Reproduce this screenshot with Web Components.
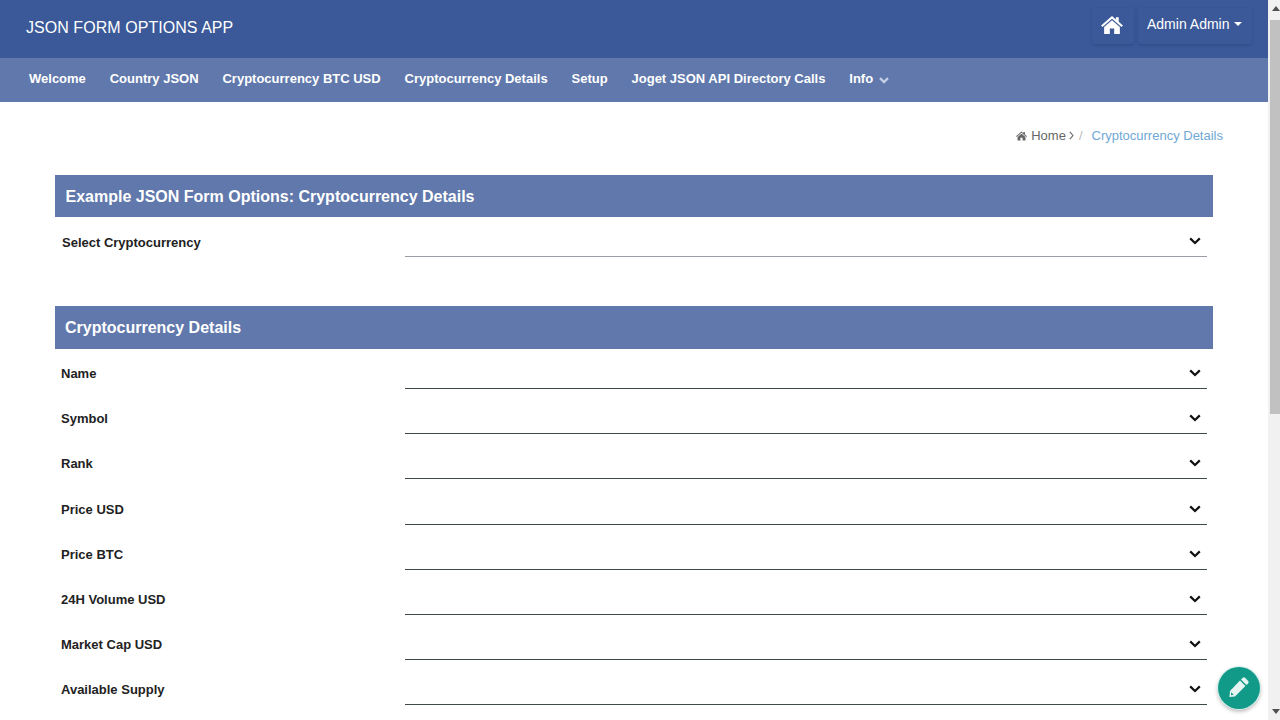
<!DOCTYPE html>
<html>
<head>
<meta charset="utf-8">
<title>JSON Form Options App</title>
<style>
    html, body { margin: 0; height: 100%; overflow: hidden; background: #fff; }
    body { display: flex; font-family: "Liberation Sans", Arial, sans-serif; }
    #page { flex: 1; min-width: 0; height: 720px; overflow: hidden; }
</style>
</head>
<body>
<div id="page">
    <app-header title-text="JSON FORM OPTIONS APP" user="Admin Admin"></app-header>
    <app-nav>
        <nav-link>Welcome</nav-link>
        <nav-link>Country JSON</nav-link>
        <nav-link>Cryptocurrency BTC USD</nav-link>
        <nav-link>Cryptocurrency Details</nav-link>
        <nav-link>Setup</nav-link>
        <nav-link>Joget JSON API Directory Calls</nav-link>
        <nav-link has-menu>Info</nav-link>
    </app-nav>
    <bread-crumb current="Cryptocurrency Details"></bread-crumb>
    <form-section heading="Example JSON Form Options: Cryptocurrency Details" class="first">
        <form-row label="Select Cryptocurrency" muted></form-row>
    </form-section>
    <form-section heading="Cryptocurrency Details" class="second">
        <form-row label="Name"></form-row>
        <form-row label="Symbol"></form-row>
        <form-row label="Rank"></form-row>
        <form-row label="Price USD"></form-row>
        <form-row label="Price BTC"></form-row>
        <form-row label="24H Volume USD"></form-row>
        <form-row label="Market Cap USD"></form-row>
        <form-row label="Available Supply"></form-row>
    </form-section>
</div>
<page-scrollbar></page-scrollbar>
<edit-fab></edit-fab>

<script>
// Top bar with app title, home button and user menu
class AppHeader extends HTMLElement {
    constructor() {
        super();
        const template = document.createElement('template');
        template.innerHTML = `
        <style>
            :host {
                display: flex;
                align-items: flex-start;
                justify-content: space-between;
                height: 58px;
                box-sizing: border-box;
                padding: 8px 16px 0 26px;
                background: #3b5998;
                color: #fff;
            }
            .title { font-size: 16px; line-height: 39px; letter-spacing: .05px; }
            .actions { display: flex; gap: 4px; }
            .btn {
                display: flex;
                align-items: center;
                height: 36px;
                box-sizing: border-box;
                border-radius: 3px;
                box-shadow: 0 1px 3px rgba(30, 50, 100, .4);
            }
            .home { width: 42px; justify-content: center; padding: 0 2px 3px 0; }
            .user { width: 114px; padding-left: 9px; font-size: 14px; padding-bottom: 4px; }
            .caret {
                margin-left: 5px;
                border-top: 4px solid #fff;
                border-left: 4px solid transparent;
                border-right: 4px solid transparent;
            }
        </style>
        <div class="title"></div>
        <div class="actions">
            <div class="btn home">
                <svg width="22" height="18" viewBox="0 0 23 19"><path fill="#fff" d="M11.5 0 L15.6 3.6 V1.2 H18.6 V6.2 L23 10 L21.6 11.6 L11.5 2.9 L1.4 11.6 L0 10 Z M11.5 4.6 L19.8 11.7 V19 H13.8 V13.2 H9.2 V19 H3.2 V11.7 Z"/></svg>
            </div>
            <div class="btn user"><span class="name"></span><span class="caret"></span></div>
        </div>
        `;
        this.attachShadow({ mode: 'open' });
        this.shadowRoot.appendChild(template.content.cloneNode(true));
        this.shadowRoot.querySelector('.title').textContent = this.getAttribute('title-text');
        this.shadowRoot.querySelector('.name').textContent = this.getAttribute('user');
    }
}

class AppNav extends HTMLElement {
    constructor() {
        super();
        const template = document.createElement('template');
        template.innerHTML = `
        <style>
            :host {
                display: flex;
                align-items: center;
                gap: 23.9px;
                height: 44px;
                box-sizing: border-box;
                padding: 0 0 3px 29px;
                background: #6078ab;
            }
        </style>
        <slot></slot>
        `;
        this.attachShadow({ mode: 'open' });
        this.shadowRoot.appendChild(template.content.cloneNode(true));
    }
}

class NavLink extends HTMLElement {
    constructor() {
        super();
        const template = document.createElement('template');
        template.innerHTML = `
        <style>
            :host {
                display: flex;
                align-items: center;
                font-size: 13px;
                font-weight: bold;
                color: #fff;
                white-space: nowrap;
            }
            svg { display: none; margin: 4px 0 0 6px; }
            :host([has-menu]) svg { display: block; }
        </style>
        <slot></slot>
        <svg width="10" height="7" viewBox="0 0 10 7"><path d="M1 1.2 L5 5 L9 1.2" fill="none" stroke="#c3cfe6" stroke-width="2.4"/></svg>
        `;
        this.attachShadow({ mode: 'open' });
        this.shadowRoot.appendChild(template.content.cloneNode(true));
    }
}

class BreadCrumb extends HTMLElement {
    constructor() {
        super();
        const template = document.createElement('template');
        template.innerHTML = `
        <style>
            :host {
                display: flex;
                align-items: center;
                justify-content: flex-end;
                height: 73px;
                box-sizing: border-box;
                padding: 0 45px 6px 0;
                font-size: 13px;
                color: #666;
            }
            .icon { margin-right: 4px; }
            .sep { margin-left: 3px; }
            .slash { margin: 0 9px 0 5px; color: #bbb; }
            .current { color: #6fa8d6; }
        </style>
        <svg class="icon" width="11" height="10" viewBox="0 0 23 19"><path fill="#666" d="M11.5 0 L15.6 3.6 V1.2 H18.6 V6.2 L23 10 L21.6 11.6 L11.5 2.9 L1.4 11.6 L0 10 Z M11.5 4.6 L19.8 11.7 V19 H13.8 V13.2 H9.2 V19 H3.2 V11.7 Z"/></svg>
        <span>Home</span>
        <svg class="sep" width="5" height="9" viewBox="0 0 5 9"><path d="M.8 .8 L4 4.5 L.8 8.2" fill="none" stroke="#666" stroke-width="1.1"/></svg>
        <span class="slash">/</span>
        <span class="current"></span>
        `;
        this.attachShadow({ mode: 'open' });
        this.shadowRoot.appendChild(template.content.cloneNode(true));
        this.shadowRoot.querySelector('.current').textContent = this.getAttribute('current');
    }
}

// Blue section heading followed by its rows
class FormSection extends HTMLElement {
    constructor() {
        super();
        const template = document.createElement('template');
        template.innerHTML = `
        <style>
            :host {
                display: block;
                margin: 0 55px 0 55px;
            }
            :host(.second) { margin-top: 49px; }
            .heading {
                height: 42px;
                line-height: 43px;
                padding-left: 10.5px;
                background: #6078ab;
                color: #fff;
                font-size: 16px;
                font-weight: bold;
            }
            :host(.second) .heading { height: 43px; line-height: 43px; padding-left: 10px; }
        </style>
        <div class="heading"></div>
        <slot></slot>
        `;
        this.attachShadow({ mode: 'open' });
        this.shadowRoot.appendChild(template.content.cloneNode(true));
        this.shadowRoot.querySelector('.heading').textContent = this.getAttribute('heading');
    }
}

class FormRow extends HTMLElement {
    constructor() {
        super();
        const template = document.createElement('template');
        template.innerHTML = `
        <style>
            :host {
                display: grid;
                grid-template-columns: 344px 802px;
                height: 45.2px;
                box-sizing: border-box;
                padding-left: 6px;
                font-size: 13px;
                font-weight: bold;
                color: #222;
            }
            :host(:first-child) { height: 40px; }
            .label { align-self: end; padding-bottom: 8px; line-height: 15px; }
            :host([muted]) .label { margin-left: 1px; padding-bottom: 7px; }
            .select {
                display: flex;
                justify-content: flex-end;
                align-items: flex-end;
                box-sizing: border-box;
                border-bottom: 1px solid #3f4a4a;
                padding: 0 6px 11px 0;
            }
            :host([muted]) .select { border-bottom-color: #9a9fa6; }
            svg { display: block; }
        </style>
        <div class="label"></div>
        <div class="select">
            <svg width="12" height="8" viewBox="0 0 12 8"><path d="M1.2 1.4 L6 6 L10.8 1.4" fill="none" stroke="#111" stroke-width="2.2"/></svg>
        </div>
        `;
        this.attachShadow({ mode: 'open' });
        this.shadowRoot.appendChild(template.content.cloneNode(true));
        this.shadowRoot.querySelector('.label').textContent = this.getAttribute('label');
    }
}

// Floating edit button, sits over the page
class EditFab extends HTMLElement {
    constructor() {
        super();
        const template = document.createElement('template');
        template.innerHTML = `
        <style>
            :host {
                position: fixed;
                left: 1218px;
                top: 667px;
                width: 42px;
                height: 42px;
                display: flex;
                align-items: center;
                justify-content: center;
                border-radius: 50%;
                background: #129a89;
                box-shadow: 0 0 0 1px #d8f0ec, 0 2px 4px rgba(0, 0, 0, .35);
            }
            svg { margin-top: -2px; }
        </style>
        <svg width="22" height="22" viewBox="0 0 22 22">
            <path fill="#e6f5f2" d="M14.8 1.8 a1.6 1.6 0 0 1 2.2 0 L20.2 5 a1.6 1.6 0 0 1 0 2.2 L18.4 9 L13 3.6 Z"/>
            <path fill="#e6f5f2" d="M12 4.6 L17.4 10 L7 20.4 L1.4 21 L2 15 Z"/>
            <path fill="#129a89" d="M3.2 16.2 L5.8 18.8 L3 19.2 Z"/>
        </svg>
        `;
        this.attachShadow({ mode: 'open' });
        this.shadowRoot.appendChild(template.content.cloneNode(true));
    }
}

class PageScrollbar extends HTMLElement {
    constructor() {
        super();
        const template = document.createElement('template');
        template.innerHTML = `
        <style>
            :host {
                display: flex;
                flex-direction: column;
                width: 12px;
                height: 720px;
                flex: none;
                background: #f1f1f1;
            }
            .arrow { height: 17px; display: flex; align-items: center; justify-content: center; padding-left: 4px; }
            .thumb { height: 394px; margin: 3px 0 0 2px; background: #c1c1c1; }
            .rest { flex: 1; }
            .up { border-bottom: 5px solid #505050; border-left: 4px solid transparent; border-right: 4px solid transparent; }
            .down { border-top: 5px solid #505050; border-left: 4px solid transparent; border-right: 4px solid transparent; }
        </style>
        <div class="arrow"><span class="up"></span></div>
        <div class="thumb"></div>
        <div class="rest"></div>
        <div class="arrow"><span class="down"></span></div>
        `;
        this.attachShadow({ mode: 'open' });
        this.shadowRoot.appendChild(template.content.cloneNode(true));
    }
}

customElements.define('app-header', AppHeader);
customElements.define('app-nav', AppNav);
customElements.define('nav-link', NavLink);
customElements.define('bread-crumb', BreadCrumb);
customElements.define('form-section', FormSection);
customElements.define('form-row', FormRow);
customElements.define('edit-fab', EditFab);
customElements.define('page-scrollbar', PageScrollbar);
</script>
</body>
</html>
